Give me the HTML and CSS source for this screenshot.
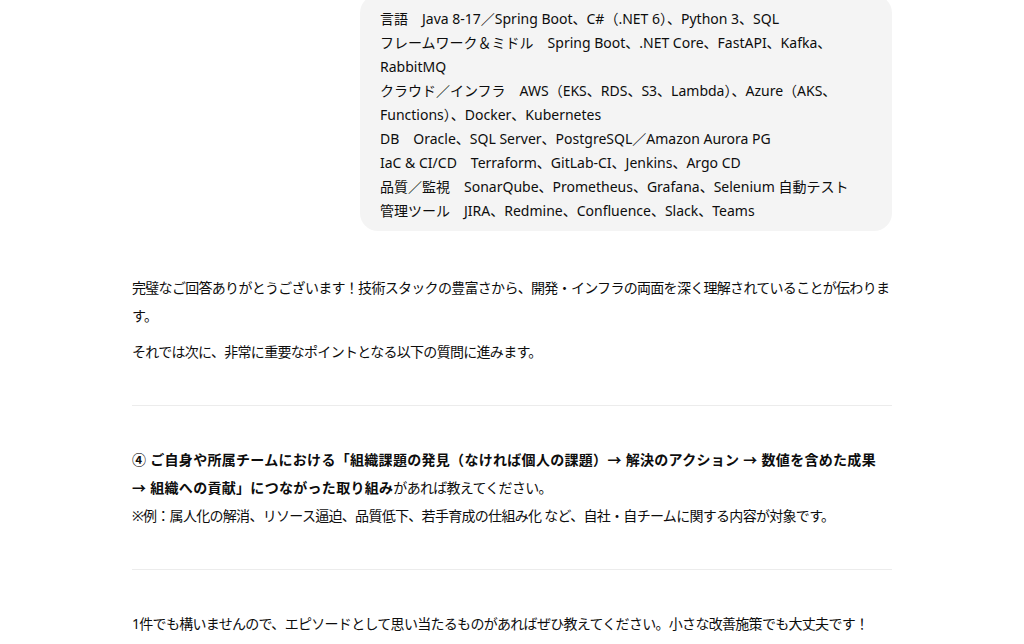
FILE: index.html
```html
<!DOCTYPE html>
<html lang="ja">
<head>
    <meta charset="UTF-8">
    <meta name="viewport" content="width=device-width, initial-scale=1.0">
    <title>チャット</title>
    <link rel="stylesheet" href="styles.css">
</head>
<body>
    <main class="thread">
        <div class="msg user">
            <div class="bubble">
                言語　Java 8-17／Spring Boot、C#（.NET 6）、Python 3、SQL<br>
                フレームワーク＆ミドル　Spring Boot、.NET Core、FastAPI、Kafka、RabbitMQ<br>
                クラウド／インフラ　AWS（EKS、RDS、S3、Lambda）、Azure（AKS、Functions）、Docker、Kubernetes<br>
                DB　Oracle、SQL Server、PostgreSQL／Amazon Aurora PG<br>
                IaC &amp; CI/CD　Terraform、GitLab-CI、Jenkins、Argo CD<br>
                品質／監視　SonarQube、Prometheus、Grafana、Selenium 自動テスト<br>
                管理ツール　JIRA、Redmine、Confluence、Slack、Teams
            </div>
        </div>

        <div class="msg assistant">
            <p>完璧なご回答ありがとうございます！技術スタックの豊富さから、開発・インフラの両面を深く理解されていることが伝わります。</p>
            <p>それでは次に、非常に重要なポイントとなる以下の質問に進みます。</p>
            <hr>
            <p><strong>④ ご自身や所属チームにおける「組織課題の発見（なければ個人の課題）→ 解決のアクション → 数値を含めた成果 →&nbsp;組織への貢献」につながった取り組み</strong>があれば教えてください。<br>
            ※例：属人化の解消、リソース逼迫、品質低下、若手育成の仕組み化 など、自社・自チームに関する内容が対象です。</p>
            <hr>
            <p>1件でも構いませんので、エピソードとして思い当たるものがあればぜひ教えてください。小さな改善施策でも大丈夫です！</p>
        </div>
    </main>
</body>
</html>
```

FILE: styles.css
```css
body {
    margin: 0;
    background: #ffffff;
    color: #0d0d0d;
    font-family: "Noto Sans", "Noto Sans CJK JP", sans-serif;
    font-size: 14px;
    overflow: hidden;
}
.thread {
    width: 760px;
    margin: 0 auto;
}
.msg.user {
    display: flex;
    justify-content: flex-end;
}
.bubble {
    max-width: 70%;
    box-sizing: border-box;
    margin-top: -5px;
    padding: 12px 20px 8px;
    background-color: #f4f4f4;
    border-radius: 18px;
    line-height: 24px;
}
.msg.assistant {
    margin-top: 43px;
    letter-spacing: -0.7px;
}
.msg.assistant p {
    margin: 0 0 8px;
    line-height: 28px;
}
.msg.assistant strong {
    font-weight: 700;
    letter-spacing: 0.3px;
}
hr {
    height: 0;
    margin: 39px 0 40px;
    border: none;
    border-top: 1px solid #ececec;
}
```
